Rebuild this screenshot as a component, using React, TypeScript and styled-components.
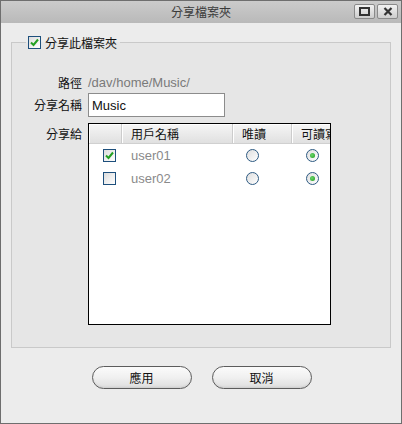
import { createGlobalStyle } from "styled-components";
import styled from "styled-components";

const GlobalStyle = createGlobalStyle`
  html, body {
    margin: 0;
    padding: 0;
    background: #ececec;
  }
  body {
    font-family: "Liberation Sans", "Noto Sans CJK TC", sans-serif;
    font-size: 12px;
    color: #111;
  }
`;

const cjk = `"Noto Sans CJK TC", "Liberation Sans", sans-serif`;

const Window = styled.div`
  width: 402px;
  height: 424px;
  box-sizing: border-box;
  border: 1px solid #6e6e6e;
  background: #ececec;
  display: flex;
  flex-direction: column;
`;

const TitleBar = styled.div`
  height: 22px;
  display: grid;
  grid-template-columns: 1fr auto 1fr;
  align-items: center;
  background: linear-gradient(#cbcbcb, #b9b9b9);
`;

const Title = styled.div`
  grid-column: 2;
  font-family: ${cjk};
  font-size: 12px;
  line-height: 22px;
  color: #3a3a3a;
`;

const TitleButtons = styled.div`
  grid-column: 3;
  justify-self: end;
  display: flex;
  gap: 2px;
  padding-right: 3px;
  margin-top: -2px;
`;

const TitleButton = styled.div`
  width: 21px;
  height: 15px;
  box-sizing: border-box;
  border: 1px solid #8a8a8a;
  border-radius: 2px;
  background: linear-gradient(#f2f2f2, #cdcdcd);
  display: flex;
  align-items: center;
  justify-content: center;
`;

const Content = styled.div`
  padding: 13px 10px 0 10px;
  display: flex;
  flex-direction: column;
`;

const Fieldset = styled.fieldset`
  margin: 0;
  padding: 0 0 22px 0;
  min-width: 0;
  border: 1px solid #c9c9c9;
  background: #e6e6e6;
`;

const Legend = styled.legend`
  margin-left: 14px;
  padding: 0 3px 0 2px;
  display: flex;
  align-items: center;
  gap: 4px;
  height: 13px;
  font-family: ${cjk};
  font-size: 12px;
  line-height: 13px;
`;

const Form = styled.div`
  margin-top: 24px;
  display: grid;
  grid-template-columns: 70px 243px;
  column-gap: 6px;
  align-items: center;
`;

const Label = styled.div<{ $top?: boolean }>`
  text-align: right;
  font-family: ${cjk};
  font-size: 12px;
  line-height: 16px;
  color: #111;
  align-self: ${(p) => (p.$top ? "start" : "center")};
  margin-top: ${(p) => (p.$top ? "9px" : "0")};
`;

const PathText = styled.div`
  height: 20px;
  line-height: 20px;
  font-size: 13px;
  color: #7a7a7a;
`;

const TextInput = styled.input`
  width: 137px;
  height: 24px;
  box-sizing: border-box;
  border: 1px solid #8c8c8c;
  background: #fff;
  padding: 0 3px;
  font-family: "Liberation Sans", sans-serif;
  font-size: 13px;
  color: #111;
  outline: none;
`;

const Table = styled.div`
  margin-top: 6px;
  height: 202px;
  box-sizing: border-box;
  border: 1px solid #000;
  background: #fff;
  overflow: hidden;
`;

const Row = styled.div<{ $header?: boolean }>`
  display: grid;
  grid-template-columns: 33px 111px 59px 59px;
  height: ${(p) => (p.$header ? "20px" : "23px")};
  white-space: nowrap;
`;

const HeadCell = styled.div`
  box-sizing: border-box;
  padding-left: 9px;
  display: flex;
  align-items: center;
  font-family: ${cjk};
  font-size: 12px;
  color: #111;
  background: linear-gradient(#f6f6f6, #e0e0e0);
  border-right: 1px solid #cccccc;
  border-bottom: 1px solid #d0d0d0;
  box-shadow: inset 1px 1px #ffffff;
`;

const Cell = styled.div<{ $pad: number }>`
  display: flex;
  align-items: center;
  padding-left: ${(p) => p.$pad}px;
`;

const UserName = styled.span`
  font-size: 13px;
  color: #8a8a8a;
`;

const CheckBox = styled.span`
  width: 13px;
  height: 13px;
  box-sizing: border-box;
  border: 1px solid #1d4f7c;
  background: linear-gradient(135deg, #dcdcdc, #ffffff);
  display: inline-flex;
  align-items: center;
  justify-content: center;
  flex: none;
`;

const Radio = styled.span<{ $on?: boolean }>`
  width: 13px;
  height: 13px;
  box-sizing: border-box;
  border-radius: 50%;
  border: 1px solid #2d5a82;
  background: linear-gradient(135deg, #dedede, #ffffff);
  display: inline-flex;
  align-items: center;
  justify-content: center;
  &::after {
    content: "";
    width: 5px;
    height: 5px;
    border-radius: 50%;
    background: radial-gradient(circle at 40% 40%, #6ad66a, #1f9a1f);
    display: ${(p) => (p.$on ? "block" : "none")};
  }
`;

const ButtonBar = styled.div`
  margin-top: 18px;
  display: flex;
  justify-content: center;
  gap: 20px;
  padding-left: 1px;
`;

const Button = styled.button`
  width: 100px;
  height: 23px;
  box-sizing: border-box;
  border: 1px solid #5c5c5c;
  border-radius: 12px;
  background: linear-gradient(#fbfbfb, #f0f0f0 50%, #dedede);
  box-shadow: inset 0 -1px 2px rgba(0, 0, 0, 0.08);
  font-family: ${cjk};
  font-size: 12px;
  color: #111;
  padding: 0;
  cursor: pointer;
`;

const Check = ({ checked }: { checked?: boolean }) => (
  <CheckBox>
    {checked && (
      <svg width="11" height="11" viewBox="0 0 11 11">
        <path d="M2 5.5 L4.5 8 L9 2.5" fill="none" stroke="#23a023" strokeWidth="2" />
      </svg>
    )}
  </CheckBox>
);

const users = [
  { name: "user01", shared: true, readOnly: false },
  { name: "user02", shared: false, readOnly: false },
];

const App = () => {
  return (
    <>
      <GlobalStyle />
      <Window>
        <TitleBar>
          <Title>分享檔案夾</Title>
          <TitleButtons>
            <TitleButton>
              <svg width="11" height="9" viewBox="0 0 11 9">
                <rect x="1" y="1" width="9" height="7" fill="none" stroke="#333" strokeWidth="2" />
              </svg>
            </TitleButton>
            <TitleButton>
              <svg width="10" height="9" viewBox="0 0 10 9">
                <path d="M1.5 1 L8.5 8 M8.5 1 L1.5 8" stroke="#333" strokeWidth="2.2" />
              </svg>
            </TitleButton>
          </TitleButtons>
        </TitleBar>
        <Content>
          <Fieldset>
            <Legend>
              <Check checked />
              分享此檔案夾
            </Legend>
            <Form>
              <Label>路徑</Label>
              <PathText>/dav/home/Music/</PathText>
              <Label>分享名稱</Label>
              <TextInput defaultValue="Music" />
              <Label $top>分享給</Label>
              <Table>
                <Row $header>
                  <HeadCell />
                  <HeadCell>用戶名稱</HeadCell>
                  <HeadCell>唯讀</HeadCell>
                  <HeadCell>可讀寫</HeadCell>
                </Row>
                {users.map((u) => (
                  <Row key={u.name}>
                    <Cell $pad={14}>
                      <Check checked={u.shared} />
                    </Cell>
                    <Cell $pad={9}>
                      <UserName>{u.name}</UserName>
                    </Cell>
                    <Cell $pad={13}>
                      <Radio $on={u.readOnly} />
                    </Cell>
                    <Cell $pad={14}>
                      <Radio $on={!u.readOnly} />
                    </Cell>
                  </Row>
                ))}
              </Table>
            </Form>
          </Fieldset>
          <ButtonBar>
            <Button>應用</Button>
            <Button>取消</Button>
          </ButtonBar>
        </Content>
      </Window>
    </>
  );
};

export default App;
